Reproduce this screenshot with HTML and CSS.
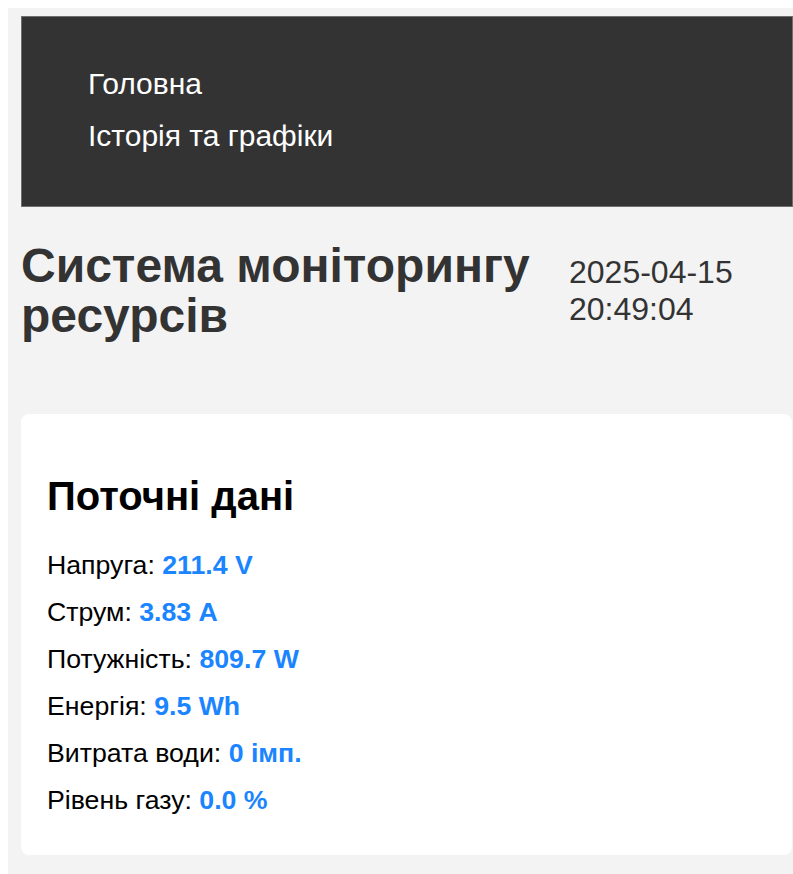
FILE: index.html
```html
<!DOCTYPE html>
<html lang="uk">
<head>
<meta charset="utf-8">
<title>Система моніторингу ресурсів</title>
<link rel="stylesheet" href="styles.css">
</head>
<body>
  <header class="site-header">
    <nav>
      <ul class="nav-list">
        <li><a href="#" class="nav-link">Головна</a></li>
        <li><a href="#" class="nav-link">Історія та графіки</a></li>
      </ul>
    </nav>
  </header>

  <section class="page-head">
    <h1 class="page-title">Система моніторингу ресурсів</h1>
    <div class="clock">2025-04-15 20:49:04</div>
  </section>

  <section class="card">
    <h2 class="card-title">Поточні дані</h2>
    <p class="reading">Напруга: <span class="value">211.4 V</span></p>
    <p class="reading">Струм: <span class="value">3.83 A</span></p>
    <p class="reading">Потужність: <span class="value">809.7 W</span></p>
    <p class="reading">Енергія: <span class="value">9.5 Wh</span></p>
    <p class="reading">Витрата води: <span class="value">0 імп.</span></p>
    <p class="reading">Рівень газу: <span class="value">0.0 %</span></p>
  </section>
</body>
</html>
```

FILE: styles.css
```css
html {
  background: #ffffff;
}

body {
  margin: 8px 0 0 8px;
  padding: 8px 0 60px 13px;
  background: #f3f3f3;
  font-family: "Liberation Sans", Arial, sans-serif;
  color: #000;
}

/* top navigation bar */
.site-header {
  background: #333333;
  border: 1px solid #6f6f6f;
  padding: 41px 0 44px 66px;
}

.nav-list {
  list-style: none;
  margin: 0;
  padding: 0;
}

.nav-link {
  color: #ffffff;
  text-decoration: none;
  font-size: 30px;
  line-height: 52px;
  display: block;
}

/* title + live clock */
.page-head {
  display: grid;
  grid-template-columns: 531px 1fr;
  column-gap: 17px;
  align-items: start;
  padding: 34px 0 73px;
}

.page-title {
  margin: 0;
  font-size: 48px;
  line-height: 50px;
  font-weight: bold;
  color: #333333;
}

.clock {
  font-size: 32px;
  color: #333333;
  margin-top: 13px;
}

/* current readings card */
.card {
  background: #ffffff;
  border-radius: 8px;
  margin-right: 1px;
  padding: 60px 26px 31px;
}

.card-title {
  margin: 0 0 24px;
  font-size: 40px;
  line-height: 44px;
  font-weight: bold;
}

.reading {
  margin: 0;
  font-size: 26.7px;
  line-height: 47px;
}

.value {
  color: #1a85ff;
  font-weight: bold;
}
```
